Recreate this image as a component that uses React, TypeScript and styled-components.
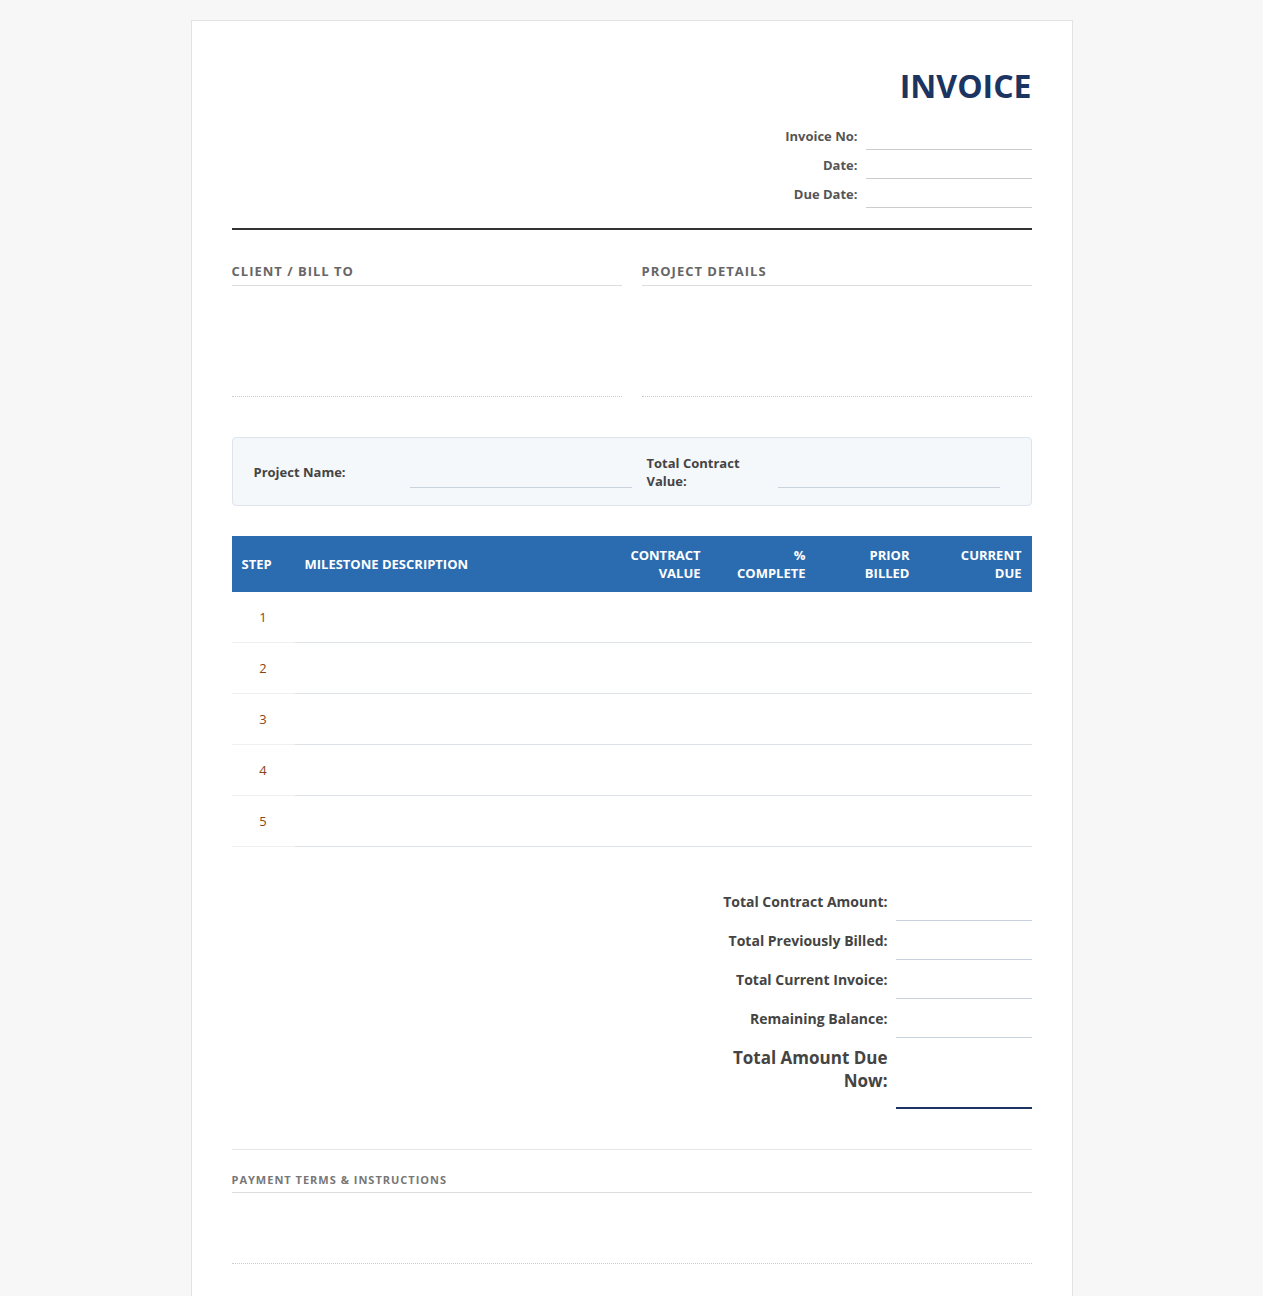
import React from "react";
import styled, { createGlobalStyle } from "styled-components";

const Global = createGlobalStyle`
  body { margin: 0; background: #f7f7f7; font-family: "Open Sans", "Liberation Sans", sans-serif; color: #333; }
`;

const Page = styled.div`
  width: 800px;
  margin: 20px auto 0;
  background: #fff;
  border: 1px solid #e2e2e2;
  border-bottom: none;
  padding: 40px 40px 70px;
`;

const Header = styled.div`
  display: flex;
  flex-direction: column;
  align-items: flex-end;
  border-bottom: 2px solid #333;
  padding-bottom: 20px;
`;

const Title = styled.h1`
  margin: 4px 0 14px;
  font-size: 32px;
  font-weight: 700;
  color: #1b3461;
  line-height: 42px;
`;

const MetaRow = styled.div`
  display: flex;
  align-items: center;
  gap: 8px;
  height: 29px;
`;

const MetaLabel = styled.span`
  font-size: 13px;
  font-weight: 700;
  color: #555;
`;

const MetaLine = styled.div`
  width: 166px;
  height: 28px;
  border-bottom: 1px solid #ccc;
`;

const Parties = styled.div`
  display: grid;
  grid-template-columns: 1fr 1fr;
  gap: 20px;
  margin-top: 32px;
`;

const SectionHead = styled.div`
  font-size: 13px;
  font-weight: 700;
  letter-spacing: 1px;
  color: #666;
  padding-bottom: 5px;
  border-bottom: 1px solid #ddd;
`;

const FillArea = styled.div<{ $h: number }>`
  height: ${(p) => p.$h}px;
  border-bottom: 1px dotted #ccc;
`;

const ProjectBox = styled.div`
  margin-top: 40px;
  background: #f5f8fb;
  border: 1px solid #dde4ec;
  border-radius: 4px;
  padding: 16px 16px 15px 21px;
  display: grid;
  grid-template-columns: 156px 222px 146px 222px;
  align-items: center;
  column-gap: 0;
`;

const BoxLabel = styled.span`
  font-size: 13px;
  font-weight: 700;
  color: #444;
`;

const BoxLine = styled.div<{ $ml?: number }>`
  height: 31px;
  border-bottom: 1px solid #c9d3de;
  margin-left: ${(p) => p.$ml || 0}px;
`;

const Table = styled.table`
  margin-top: 30px;
  width: 100%;
  border-collapse: collapse;
`;

const Th = styled.th<{ $right?: boolean }>`
  background: #2b6cb0;
  color: #fff;
  font-size: 13px;
  font-weight: 700;
  text-align: ${(p) => (p.$right ? "right" : "left")};
  padding: 10px;
  height: 35px;
  line-height: 18px;
`;

const StepCell = styled.td`
  text-align: center;
  font-size: 13px;
  color: #8b4513;
  height: 48px;
  border-bottom: 1px solid #f0f0f0;
`;

const Td = styled.td`
  border-bottom: 1px solid #dde2e8;
`;

const Totals = styled.div`
  margin-top: 35px;
  display: flex;
  flex-direction: column;
  align-items: flex-end;
`;

const TotalRow = styled.div`
  display: flex;
  align-items: center;
  gap: 8px;
  height: 39px;
`;

const TotalLabel = styled.span<{ $big?: boolean }>`
  font-size: ${(p) => (p.$big ? 17 : 14)}px;
  font-weight: 700;
  color: #444;
  text-align: right;
  width: ${(p) => (p.$big ? 160 : 240)}px;
  line-height: 23px;
`;

const TotalLine = styled.div<{ $strong?: boolean }>`
  width: 136px;
  align-self: stretch;
  border-bottom: ${(p) => (p.$strong ? "2px solid #1b3461" : "1px solid #c9d3de")};
`;

const Terms = styled.div`
  margin-top: 40px;
  border-top: 1px solid #e5e5e5;
  padding-top: 22px;
`;

const TermsHead = styled.div`
  font-size: 11px;
  font-weight: 700;
  letter-spacing: 1px;
  color: #777;
  padding-bottom: 5px;
  border-bottom: 1px solid #ddd;
`;

const steps = [1, 2, 3, 4, 5];

export default function App() {
  return (
    <>
      <Global />
      <Page>
        <Header>
          <Title>INVOICE</Title>
          {["Invoice No:", "Date:", "Due Date:"].map((l) => (
            <MetaRow key={l}>
              <MetaLabel>{l}</MetaLabel>
              <MetaLine />
            </MetaRow>
          ))}
        </Header>
        <Parties>
          <div>
            <SectionHead>CLIENT / BILL TO</SectionHead>
            <FillArea $h={110} />
          </div>
          <div>
            <SectionHead>PROJECT DETAILS</SectionHead>
            <FillArea $h={110} />
          </div>
        </Parties>
        <ProjectBox>
          <BoxLabel>Project Name:</BoxLabel>
          <BoxLine />
          <BoxLabel style={{ paddingLeft: 15 }}>Total Contract Value:</BoxLabel>
          <BoxLine />
        </ProjectBox>
        <Table>
          <thead>
            <tr>
              <Th style={{ width: 43 }}>STEP</Th>
              <Th>MILESTONE DESCRIPTION</Th>
              <Th $right style={{ width: 90 }}>CONTRACT<br />VALUE</Th>
              <Th $right style={{ width: 85 }}>%<br />COMPLETE</Th>
              <Th $right style={{ width: 84 }}>PRIOR<br />BILLED</Th>
              <Th $right style={{ width: 92 }}>CURRENT<br />DUE</Th>
            </tr>
          </thead>
          <tbody>
            {steps.map((s) => (
              <tr key={s}>
                <StepCell>{s}</StepCell>
                <Td /><Td /><Td /><Td /><Td />
              </tr>
            ))}
          </tbody>
        </Table>
        <Totals>
          {["Total Contract Amount:", "Total Previously Billed:", "Total Current Invoice:", "Remaining Balance:"].map((l) => (
            <TotalRow key={l}>
              <TotalLabel>{l}</TotalLabel>
              <TotalLine />
            </TotalRow>
          ))}
          <TotalRow style={{ height: 63, alignItems: "flex-start", paddingTop: 8 }}>
            <TotalLabel $big>Total Amount Due Now:</TotalLabel>
            <TotalLine $strong />
          </TotalRow>
        </Totals>
        <Terms>
          <TermsHead>PAYMENT TERMS &amp; INSTRUCTIONS</TermsHead>
          <FillArea $h={70} />
        </Terms>
      </Page>
    </>
  );
}
